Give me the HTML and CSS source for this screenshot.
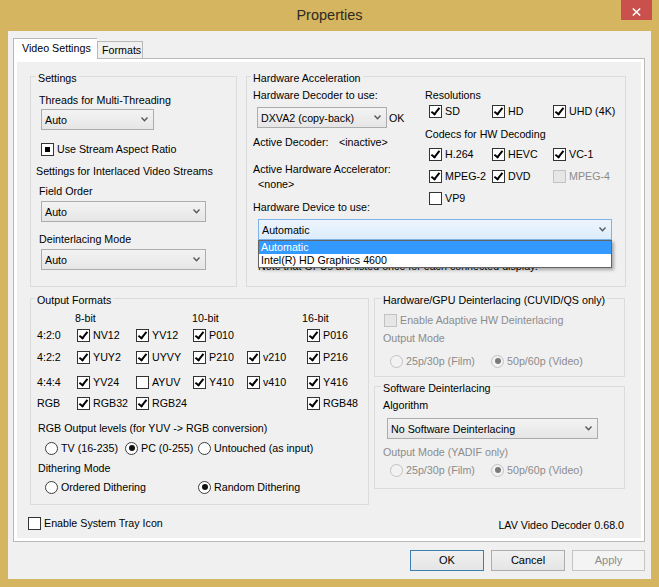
FILE: index.html
```html
<!DOCTYPE html>
<html>
<head>
<meta charset="utf-8">
<title>Properties</title>
<link rel="stylesheet" href="styles.css">
</head>
<body>
<div class="window">
  <div class="titlebar">
    <div></div>
    <div class="title">Properties</div>
    <div class="close"><svg width="9" height="8" viewBox="0 0 9 8"><path d="M0.8 0.5 L8.2 7.5 M8.2 0.5 L0.8 7.5" stroke="#fff" stroke-width="1.5" fill="none"/></svg></div>
  </div>
  <div class="client">
    <div class="tabs">
      <div class="tab active">Video Settings</div>
      <div class="tab fmt">Formats</div>
    </div>
    <div class="panel">
      <div class="page">
        <div class="row-top">
          <div class="group g-settings">
            <div class="legend">Settings</div>
            <div class="t mt8">Threads for Multi-Threading</div>
            <div class="select s-threads mt2 ml2"><span>Auto</span><svg class="arr" width="7" height="5" viewBox="0 0 7 5"><path d="M0.5 0.5 L3.5 3.8 L6.5 0.5" fill="none" stroke="#555" stroke-width="1.3"/></svg></div>
            <div class="cb ind mt12 ml2"><span class="box"></span>Use Stream Aspect Ratio</div>
            <div class="t mt8 ml-3">Settings for Interlaced Video Streams</div>
            <div class="t mt6">Field Order</div>
            <div class="select s-wide mt3 ml2"><span>Auto</span><svg class="arr" width="7" height="5" viewBox="0 0 7 5"><path d="M0.5 0.5 L3.5 3.8 L6.5 0.5" fill="none" stroke="#555" stroke-width="1.3"/></svg></div>
            <div class="t mt10">Deinterlacing Mode</div>
            <div class="select s-wide mt3 ml2"><span>Auto</span><svg class="arr" width="7" height="5" viewBox="0 0 7 5"><path d="M0.5 0.5 L3.5 3.8 L6.5 0.5" fill="none" stroke="#555" stroke-width="1.3"/></svg></div>
          </div>
          <div class="group g-hw">
            <div class="legend">Hardware Acceleration</div>
            <div class="hw-top">
              <div class="hw-left">
                <div class="t">Hardware Decoder to use:</div>
                <div class="sel-row mt5">
                  <div class="select s-dxva"><span>DXVA2 (copy-back)</span><svg class="arr" width="7" height="5" viewBox="0 0 7 5"><path d="M0.5 0.5 L3.5 3.8 L6.5 0.5" fill="none" stroke="#555" stroke-width="1.3"/></svg></div>
                  <span class="ok">OK</span>
                </div>
                <div class="t mt7 kv"><span class="k">Active Decoder:</span><span>&lt;inactive&gt;</span></div>
                <div class="t mt13">Active Hardware Accelerator:</div>
                <div class="t mt1 ml5">&lt;none&gt;</div>
                <div class="t mt9">Hardware Device to use:</div>
              </div>
              <div class="hw-right">
                <div class="t">Resolutions</div>
                <div class="cbgrid mt2">
                  <div class="cb on"><span class="box"></span>SD</div>
                  <div class="cb on"><span class="box"></span>HD</div>
                  <div class="cb on"><span class="box"></span>UHD (4K)</div>
                </div>
                <div class="t mt9">Codecs for HW Decoding</div>
                <div class="cbgrid mt6">
                  <div class="cb on"><span class="box"></span>H.264</div>
                  <div class="cb on"><span class="box"></span>HEVC</div>
                  <div class="cb on"><span class="box"></span>VC-1</div>
                </div>
                <div class="cbgrid mt8">
                  <div class="cb on"><span class="box"></span>MPEG-2</div>
                  <div class="cb on"><span class="box"></span>DVD</div>
                  <div class="cb dis"><span class="box"></span>MPEG-4</div>
                </div>
                <div class="cbgrid mt8">
                  <div class="cb"><span class="box"></span>VP9</div>
                </div>
              </div>
            </div>
            <div class="combo mt5">
              <div class="select focus"><span>Automatic</span><svg class="arr" width="7" height="5" viewBox="0 0 7 5"><path d="M0.5 0.5 L3.5 3.8 L6.5 0.5" fill="none" stroke="#555" stroke-width="1.3"/></svg></div>
              <div class="list">
                <div class="item hl">Automatic</div>
                <div class="item">Intel(R) HD Graphics 4600</div>
              </div>
            </div>
            <div class="t note">Note that GPUs are listed once for each connected display.</div>
          </div>
        </div>

        <div class="row-mid">
          <div class="group g-out">
            <div class="legend">Output Formats</div>
            <div class="frow hdr">
              <span></span>
              <span class="h8">8-bit</span>
              <span></span>
              <span class="h10">10-bit</span>
              <span></span>
              <span class="h16">16-bit</span>
            </div>
            <div class="frow r1">
              <span>4:2:0</span>
              <div class="cb on"><span class="box"></span>NV12</div>
              <div class="cb on"><span class="box"></span>YV12</div>
              <div class="cb on"><span class="box"></span>P010</div>
              <span></span>
              <div class="cb on"><span class="box"></span>P016</div>
            </div>
            <div class="frow r2">
              <span>4:2:2</span>
              <div class="cb on"><span class="box"></span>YUY2</div>
              <div class="cb on"><span class="box"></span>UYVY</div>
              <div class="cb on"><span class="box"></span>P210</div>
              <div class="cb on"><span class="box"></span>v210</div>
              <div class="cb on"><span class="box"></span>P216</div>
            </div>
            <div class="frow r3">
              <span>4:4:4</span>
              <div class="cb on"><span class="box"></span>YV24</div>
              <div class="cb"><span class="box"></span>AYUV</div>
              <div class="cb on"><span class="box"></span>Y410</div>
              <div class="cb on"><span class="box"></span>v410</div>
              <div class="cb on"><span class="box"></span>Y416</div>
            </div>
            <div class="frow r4">
              <span>RGB</span>
              <div class="cb on"><span class="box"></span>RGB32</div>
              <div class="cb on"><span class="box"></span>RGB24</div>
              <span></span>
              <span></span>
              <div class="cb on"><span class="box"></span>RGB48</div>
            </div>
            <div class="t ml1 mt11">RGB Output levels (for YUV -&gt; RGB conversion)</div>
            <div class="rrow mt6">
              <div class="rb w80"><span class="dot"></span>TV (16-235)</div>
              <div class="rb on w73"><span class="dot"></span>PC (0-255)</div>
              <div class="rb"><span class="dot"></span>Untouched (as input)</div>
            </div>
            <div class="t ml1 mt6">Dithering Mode</div>
            <div class="rrow mt5">
              <div class="rb w153"><span class="dot"></span>Ordered Dithering</div>
              <div class="rb on"><span class="dot"></span>Random Dithering</div>
            </div>
          </div>

          <div class="rcol">
            <div class="group g-gpu">
              <div class="legend">Hardware/GPU Deinterlacing (CUVID/QS only)</div>
              <div class="cb dis mt6 ml1"><span class="box"></span>Enable Adaptive HW Deinterlacing</div>
              <div class="t gray mt4">Output Mode</div>
              <div class="rrow mt9 ml7">
                <div class="rb dis w101"><span class="dot"></span>25p/30p (Film)</div>
                <div class="rb dis on"><span class="dot"></span>50p/60p (Video)</div>
              </div>
            </div>
            <div class="group g-sw">
              <div class="legend">Software Deinterlacing</div>
              <div class="t mt3">Algorithm</div>
              <div class="select s-sw mt6 ml4"><span>No Software Deinterlacing</span><svg class="arr" width="7" height="5" viewBox="0 0 7 5"><path d="M0.5 0.5 L3.5 3.8 L6.5 0.5" fill="none" stroke="#555" stroke-width="1.3"/></svg></div>
              <div class="t gray mt6">Output Mode (YADIF only)</div>
              <div class="rrow mt4 ml7">
                <div class="rb dis w101"><span class="dot"></span>25p/30p (Film)</div>
                <div class="rb dis on"><span class="dot"></span>50p/60p (Video)</div>
              </div>
            </div>
          </div>
        </div>

        <div class="footer">
          <div class="cb tray"><span class="box"></span>Enable System Tray Icon</div>
          <div class="version">LAV Video Decoder 0.68.0</div>
        </div>
      </div>
    </div>
    <div class="buttons">
      <div class="btn default">OK</div>
      <div class="btn">Cancel</div>
      <div class="btn disabled">Apply</div>
    </div>
  </div>
</div>
</body>
</html>
```

FILE: styles.css
```css
* { box-sizing: border-box; }
html, body { margin: 0; padding: 0; }
body {
  font-family: "Liberation Sans", Arial, sans-serif;
  font-size: 10.7px;
  line-height: 14px;
  color: #000;
  background: #d5b55f;
}
.window {
  width: 659px;
  height: 587px;
  background: #d5b55f;
  display: flex;
  flex-direction: column;
}
.titlebar {
  height: 31px;
  display: grid;
  grid-template-columns: 1fr auto 1fr;
  align-items: start;
}
.title {
  font-size: 14.5px;
  line-height: 30px;
  color: #2e2a20;
}
.close {
  justify-self: end;
  width: 31px;
  height: 20px;
  margin-right: 7px;
  background: #c9504d;
  display: flex;
  justify-content: center;
  align-items: center;
  padding-top: 3px;
}
.client {
  margin: 0 8px 8px;
  flex: 1;
  background: #f0f0f0;
}
.tabs {
  height: 27px;
  display: flex;
  align-items: flex-end;
  padding-left: 5px;
}
.tab {
  height: 17px;
  border: 1px solid #b9b9b9;
  border-bottom: none;
  background: #f0f0f0;
  padding-left: 4px;
  line-height: 16px;
  white-space: nowrap;
}
.tab.active {
  position: relative;
  z-index: 1;
  height: 21px;
  width: 84px;
  margin-bottom: -1px;
  background: #fff;
  padding-left: 8px;
  line-height: 19px;
  border-right: none;
}
.tab.fmt {
  width: 46px;
}
.panel {
  margin-left: 5px;
  width: 632px;
  height: 484px;
  border: 1px solid #b9b9b9;
  background: #fff;
  padding: 3px;
}
.page {
  width: 624px;
  height: 476px;
  background: #f0f0f0;
  padding: 14px 14px 0 13px;
}
.row-top {
  display: grid;
  grid-template-columns: 207px 380px;
  column-gap: 9px;
  height: 211px;
}
.group {
  border: 1px solid #dcdcdc;
}
.legend {
  width: fit-content;
  margin-top: -6px;
  padding: 0 2px;
  background: #f0f0f0;
  white-space: nowrap;
}
.t { white-space: nowrap; height: 14px; }
.gray { color: #8c8c8c; }

.g-settings { padding-left: 8px; }
.g-settings .legend { margin-left: -3px; }
.g-hw { padding-left: 6px; }
.g-hw .legend { margin-left: -2px; }

.mt1 { margin-top: 1px; }
.mt2 { margin-top: 2px; }
.mt3 { margin-top: 3px; }
.mt4 { margin-top: 4px; }
.mt5 { margin-top: 5px; }
.mt6 { margin-top: 6px; }
.mt7 { margin-top: 7px; }
.mt8 { margin-top: 8px; }
.mt9 { margin-top: 9px; }
.mt10 { margin-top: 10px; }
.mt11 { margin-top: 11px; }
.mt12 { margin-top: 12px; }
.mt13 { margin-top: 13px; }
.ml1 { margin-left: 1px; }
.ml2 { margin-left: 2px; }
.ml4 { margin-left: 4px; }
.ml5 { margin-left: 5px; }
.ml7 { margin-left: 7px; }
.ml-3 { margin-left: -3px; }

/* select / combobox */
.select {
  height: 21px;
  border: 1px solid #acacac;
  background: linear-gradient(#f3f3f3, #e6e6e6);
  display: flex;
  align-items: center;
  justify-content: space-between;
  padding: 0 5px 0 3px;
  white-space: nowrap;
}
.select.focus {
  border-color: #7eb4ea;
  background: linear-gradient(#edf5fd, #dcecfc);
}
.arr { flex: none; }
.s-threads { width: 113px; }
.s-wide { width: 165px; }
.s-dxva { width: 130px; margin-left: 4px; }
.s-sw { width: 211px; }

.sel-row {
  display: flex;
  align-items: center;
  gap: 2px;
}
.kv .k { display: inline-block; width: 86px; }

.hw-top {
  display: flex;
  margin-top: 3px;
}
.hw-left { width: 172px; }
.hw-right { flex: 1; }
.cbgrid {
  display: grid;
  grid-template-columns: 63px 61px auto;
  margin-left: 4px;
  height: 14px;
}

.combo {
  position: relative;
  width: 354px;
  margin-left: 5px;
}
.list {
  position: absolute;
  left: 0;
  top: 100%;
  width: 100%;
  z-index: 5;
  background: #fff;
  border: 1px solid #646464;
  box-shadow: 2px 2px 3px rgba(0, 0, 0, 0.3);
}
.item {
  height: 13px;
  line-height: 13px;
  padding-left: 2px;
  white-space: nowrap;
}
.item.hl { background: #3399ff; color: #fff; }
.note { margin-top: 19px; margin-left: 5px; }

/* checkbox */
.cb {
  display: flex;
  align-items: center;
  gap: 3px;
  height: 14px;
  white-space: nowrap;
}
.cb .box {
  position: relative;
  flex: none;
  width: 13px;
  height: 13px;
  border: 1px solid #333;
  background: #fff;
}
.cb.on .box::after {
  content: "";
  position: absolute;
  left: 3px;
  top: 0px;
  width: 3px;
  height: 7px;
  border: solid #000;
  border-width: 0 2px 2px 0;
  transform: rotate(38deg);
}
.cb.ind .box::after {
  content: "";
  position: absolute;
  left: 3px;
  top: 3px;
  width: 5px;
  height: 5px;
  background: #000;
}
.cb.dis { color: #8c8c8c; }
.cb.dis .box { border-color: #c2c2c2; background: #e6e6e6; }

/* radio */
.rrow { display: flex; height: 14px; align-items: center; }
.rb {
  display: flex;
  align-items: center;
  gap: 3px;
  white-space: nowrap;
  flex: none;
}
.rb .dot {
  flex: none;
  width: 13px;
  height: 13px;
  border: 1px solid #3c3c3c;
  border-radius: 50%;
  background: #fff;
  display: flex;
  align-items: center;
  justify-content: center;
}
.rb.on .dot::after {
  content: "";
  width: 6px;
  height: 6px;
  border-radius: 50%;
  background: #111;
}
.rb.dis { color: #8c8c8c; }
.rb.dis .dot { border-color: #c2c2c2; background: #f2f2f2; }
.rb.dis.on .dot::after { background: #7a7a7a; }
.w80 { width: 80px; }
.w73 { width: 73px; }
.w153 { width: 153px; }
.w101 { width: 101px; }

/* middle row */
.row-mid {
  display: grid;
  grid-template-columns: 339px 251px;
  column-gap: 5px;
  margin-top: 11px;
}
.g-out { height: 207px; padding-left: 6px; }
.g-out .legend { margin-left: -2px; }
.frow {
  display: grid;
  grid-template-columns: 40px 59px 57px 54px 60px auto;
  height: 14px;
  align-items: center;
  white-space: nowrap;
}
.frow.hdr { margin-top: 4px; }
.frow.r1 { margin-top: 3px; }
.frow.r2 { margin-top: 8px; }
.frow.r3 { margin-top: 11px; }
.frow.r4 { margin-top: 7px; }
.h8 { margin-left: -2px; }
.h10 { margin-left: -1px; }
.h16 { margin-left: -5px; }
.rrow .rb:first-child { margin-left: 8px; }
.g-gpu .rrow .rb:first-child, .g-sw .rrow .rb:first-child { margin-left: 0; }

.rcol { display: flex; flex-direction: column; }
.g-gpu { height: 79px; padding-left: 8px; }
.g-sw { height: 103px; padding-left: 8px; margin-top: 9px; }
.g-gpu .legend, .g-sw .legend { margin-left: -2px; }

.footer {
  display: flex;
  justify-content: space-between;
  align-items: flex-start;
  margin-top: 11px;
}
.tray { margin-left: -2px; }
.version { margin-top: 2px; margin-right: 3px; white-space: nowrap; }

/* buttons */
.buttons {
  display: flex;
  justify-content: flex-end;
  gap: 7px;
  margin-top: 8px;
  padding-right: 6px;
}
.btn {
  width: 74px;
  height: 21px;
  border: 1px solid #acacac;
  background: linear-gradient(#f0f0f0, #e5e5e5);
  text-align: center;
  line-height: 19px;
  font-size: 11px;
}
.btn.default { border-color: #3c7fb1; }
.btn.disabled {
  border-color: #c4c4c4;
  background: #f4f4f4;
  color: #8d8d8d;
  width: 73px;
}
```
